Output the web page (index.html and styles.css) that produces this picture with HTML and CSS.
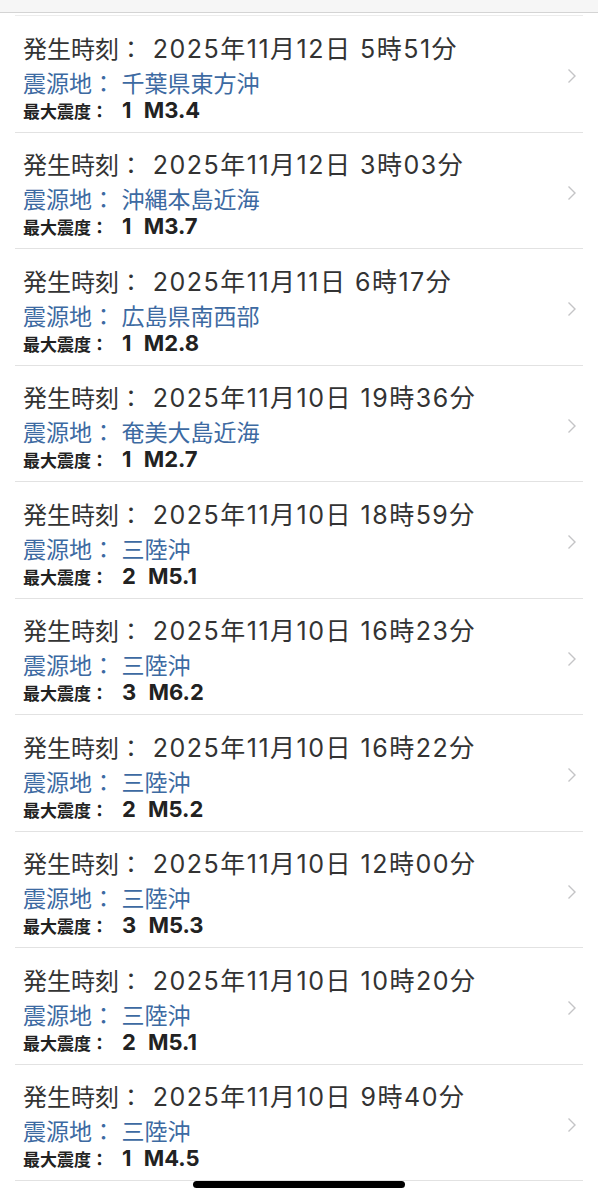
FILE: index.html
```html
<!DOCTYPE html>
<html lang="ja">

<head>
    <meta charset="UTF-8">
    <meta name="viewport" content="width=device-width, initial-scale=1.0">
    <title>地震情報</title>
    <link rel="stylesheet" href="styles.css">
</head>

<body>
    <div class="topbar"></div>
    <ul class="quake-list" id="quakeList"></ul>
    <div class="home-indicator"></div>
    <script>
        const quakes = [
            ['2025年11月12日 5時51分', '千葉県東方沖', '1', 'M3.4'],
            ['2025年11月12日 3時03分', '沖縄本島近海', '1', 'M3.7'],
            ['2025年11月11日 6時17分', '広島県南西部', '1', 'M2.8'],
            ['2025年11月10日 19時36分', '奄美大島近海', '1', 'M2.7'],
            ['2025年11月10日 18時59分', '三陸沖', '2', 'M5.1'],
            ['2025年11月10日 16時23分', '三陸沖', '3', 'M6.2'],
            ['2025年11月10日 16時22分', '三陸沖', '2', 'M5.2'],
            ['2025年11月10日 12時00分', '三陸沖', '3', 'M5.3'],
            ['2025年11月10日 10時20分', '三陸沖', '2', 'M5.1'],
            ['2025年11月10日 9時40分', '三陸沖', '1', 'M4.5']
        ];

        let list = document.getElementById('quakeList');
        quakes.forEach(q => {
            let li = document.createElement('li');
            li.className = 'quake';
            li.innerHTML = `
                <div class="quake-body">
                    <div class="quake-time">発生時刻： <span class="date">${q[0]}</span></div>
                    <div class="quake-place">震源地： ${q[1]}</div>
                    <div class="quake-scale"><span class="label">最大震度：</span><span class="value">${q[2]} ${q[3]}</span></div>
                </div>
                <svg class="chevron" width="10" height="16" viewBox="0 0 10 16">
                    <path d="M1.5 1.5 L8 8 L1.5 14.5" fill="none" stroke="#c4c4c6" stroke-width="1.4" />
                </svg>
            `;
            list.appendChild(li);
        });
    </script>
</body>

</html>
```

FILE: styles.css
```css
body {
    margin: 0;
    background-color: #ffffff;
    font-family: 'Inter', 'Noto Sans CJK JP', sans-serif;
}

.topbar {
    height: 12px;
    background-color: #f6f6f6;
    border-bottom: 1px solid #d4d4d4;
}

.quake-list {
    list-style: none;
    margin: 2px 15px 0 15px;
    padding: 0;
    border-top: 1px solid #ececec;
}

.quake {
    display: flex;
    align-items: center;
    height: 116.5px;
    box-sizing: border-box;
    border-bottom: 1px solid #e2e2e2;
    padding: 5px 6px 0 8px;
}

.quake-body {
    flex: 1;
}

.quake-time {
    font-size: 24px;
    line-height: 34px;
    color: #333333;
}

.quake-time .date {
    margin-left: 3px;
    font-size: 25px;
    letter-spacing: 1.5px;
}

.quake-place {
    font-size: 23px;
    line-height: 34px;
    color: #3d6aa2;
}

.quake-scale {
    line-height: 18px;
    color: #222222;
    font-weight: bold;
}

.quake-scale .label {
    font-size: 17px;
}

.quake-scale .value {
    font-size: 22px;
    margin-left: 14px;
    word-spacing: 7px;
}

.chevron {
    flex-shrink: 0;
}

.home-indicator {
    position: absolute;
    left: 193px;
    top: 1181px;
    width: 212px;
    height: 7px;
    border-radius: 4px;
    background-color: #000000;
}
```
